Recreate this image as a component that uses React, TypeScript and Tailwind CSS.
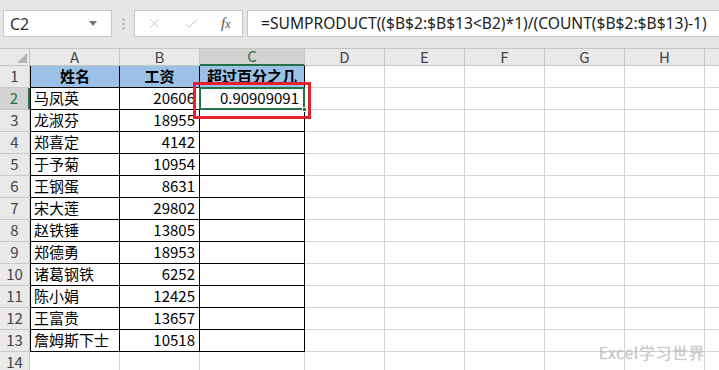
import { Check, X } from "lucide-react";

type Col = { key: string; w: string };

const cols: Col[] = [
    { key: "A", w: "w-[90px]" },
    { key: "B", w: "w-[80px]" },
    { key: "C", w: "w-[105px]" },
    { key: "D", w: "w-[80px]" },
    { key: "E", w: "w-[80px]" },
    { key: "F", w: "w-[80px]" },
    { key: "G", w: "w-[80px]" },
    { key: "H", w: "w-[80px]" },
    { key: "I", w: "w-[80px]" },
];

const people: [string, number][] = [
    ["马凤英", 20606],
    ["龙淑芬", 18955],
    ["郑喜定", 4142],
    ["于予菊", 10954],
    ["王钢蛋", 8631],
    ["宋大莲", 29802],
    ["赵铁锤", 13805],
    ["郑德勇", 18953],
    ["诸葛钢铁", 6252],
    ["陈小娟", 12425],
    ["王富贵", 13657],
    ["詹姆斯下士", 10518],
];

const cjk = "font-['Noto_Sans_CJK_SC',sans-serif]";

function RowHead({ n, sel }: { n: number; sel?: boolean }) {
    return (
        <div
            className={
                sel
                    ? "flex w-[30px] shrink-0 items-center justify-center border-b border-r-2 border-b-[#c8c8c8] border-r-[#217346] bg-[#d2d2d2] text-[15px] text-[#217346]"
                    : "flex w-[30px] shrink-0 items-center justify-center border-b border-r border-[#c8c8c8] bg-[#e9e9e9] text-[15px] text-[#444]"
            }
        >
            {n}
        </div>
    );
}

function EmptyCells({ from }: { from: number }) {
    return (
        <>
            {cols.slice(from).map((c) => (
                <div key={c.key} className={`${c.w} shrink-0 border-b border-r border-[#d4d4d4] bg-white`} />
            ))}
        </>
    );
}

export default function App() {
    return (
        <div className={`relative h-[370px] w-[719px] overflow-hidden bg-[#e6e6e6] ${cjk}`}>
            {/* formula bar */}
            <div className="flex h-[48px] items-start pt-[10px]">
                <div className="ml-[3px] flex h-[27px] w-[109px] shrink-0 items-center justify-between border border-[#c6c6c6] bg-white pl-[6px] pr-[14px]">
                    <span className="font-['Noto_Sans',sans-serif] text-[16px] text-[#333]">C2</span>
                    <svg width="8" height="5" viewBox="0 0 8 5">
                        <path d="M0 0h8L4 5z" fill="#777" />
                    </svg>
                </div>
                <div className="flex h-[27px] w-[22px] shrink-0 items-center justify-center">
                    <svg width="3" height="12" viewBox="0 0 3 12">
                        <circle cx="1.5" cy="1.5" r="1" fill="#999" />
                        <circle cx="1.5" cy="6" r="1" fill="#999" />
                        <circle cx="1.5" cy="10.5" r="1" fill="#999" />
                    </svg>
                </div>
                <div className="flex h-[27px] w-[109px] shrink-0 items-center border border-[#c6c6c6] bg-white pl-[12px]">
                    <X size={15} strokeWidth={1.3} className="text-[#b5b5b5]" />
                    <Check size={16} strokeWidth={1.3} className="ml-[21px] text-[#b5b5b5]" />
                    <span className="ml-[22px] font-['Liberation_Serif',serif] text-[15px] italic text-[#555]">
                        f<span className="text-[12px]">x</span>
                    </span>
                </div>
                <div className="ml-[4px] flex h-[27px] flex-1 items-center whitespace-nowrap border border-r-0 border-[#c6c6c6] bg-white pl-[13px] font-['Noto_Sans',sans-serif] text-[15.6px] text-[#222]">
                    =SUMPRODUCT(($B$2:$B$13&lt;B2)*1)/(COUNT($B$2:$B$13)-1)
                </div>
            </div>

            {/* column headers */}
            <div className="flex h-[18px] border-t border-[#c6c6c6]">
                <div className="relative w-[30px] shrink-0 border-b border-r border-[#c6c6c6] bg-[#e9e9e9]">
                    <svg className="absolute bottom-[2px] right-[2px]" width="10" height="10" viewBox="0 0 10 10">
                        <path d="M10 0v10H0z" fill="#b4b4b4" />
                    </svg>
                </div>
                {cols.map((c) =>
                    c.key === "C" ? (
                        <div
                            key={c.key}
                            className={`${c.w} flex shrink-0 items-center justify-center border-b-2 border-r border-b-[#217346] border-r-[#c6c6c6] bg-[#d2d2d2] text-[15px] text-[#217346]`}
                        >
                            {c.key}
                        </div>
                    ) : (
                        <div
                            key={c.key}
                            className={`${c.w} flex shrink-0 items-center justify-center border-b border-r border-[#c6c6c6] bg-[#e9e9e9] text-[15px] text-[#444]`}
                        >
                            {c.key}
                        </div>
                    )
                )}
            </div>

            {/* row 1 */}
            <div className="flex h-[22px]">
                <RowHead n={1} />
                <div className="flex w-[90px] shrink-0 items-center justify-center border-b border-l border-r border-black bg-[#9bc2e6] text-[15px] font-bold text-black">
                    姓名
                </div>
                <div className="flex w-[80px] shrink-0 items-center justify-center border-b border-r border-black bg-[#9bc2e6] text-[15px] font-bold text-black">
                    工资
                </div>
                <div className="flex w-[105px] shrink-0 items-center justify-center overflow-hidden whitespace-nowrap border-b border-r border-black bg-[#9bc2e6] text-[15px] font-bold text-black">
                    超过百分之几
                </div>
                <EmptyCells from={3} />
            </div>

            {/* data rows */}
            {people.map(([name, pay], i) => (
                <div key={name} className="flex h-[22px]">
                    <RowHead n={i + 2} sel={i === 0} />
                    <div className="flex w-[90px] shrink-0 items-center border-b border-l border-r border-black bg-white pl-[3px] text-[15px] text-black">
                        {name}
                    </div>
                    <div className="flex w-[80px] shrink-0 items-center justify-end border-b border-r border-black bg-white pr-[4px] text-[15px] text-black">
                        {pay}
                    </div>
                    {i === 0 ? (
                        <div className="relative flex w-[105px] shrink-0 items-center justify-end border-b border-r border-black bg-white pr-[5px] text-[15px] text-black">
                            <div className="absolute -left-px -top-px bottom-[-1px] right-[-1px] border-2 border-[#217346]" />
                            <div className="absolute bottom-[-3px] right-[-3px] h-[5px] w-[5px] border border-white bg-[#217346]" />
                            0.90909091
                        </div>
                    ) : (
                        <div className="w-[105px] shrink-0 border-b border-r border-black bg-white" />
                    )}
                    <EmptyCells from={3} />
                </div>
            ))}

            {/* row 14 */}
            <div className="flex h-[22px]">
                <RowHead n={14} />
                <EmptyCells from={0} />
            </div>

            {/* red annotation box */}
            <div className="absolute left-[193px] top-[82px] h-[37px] w-[118px] border-[3px] border-[#e3222b]" />

            {/* watermark */}
            <div className="absolute left-[599px] top-[341px] whitespace-nowrap text-[15.5px] font-light tracking-[1px] text-[#cfcfcf] [text-shadow:0_0_1px_#8a8a8a]">
                Excel学习世界
            </div>
        </div>
    );
}
